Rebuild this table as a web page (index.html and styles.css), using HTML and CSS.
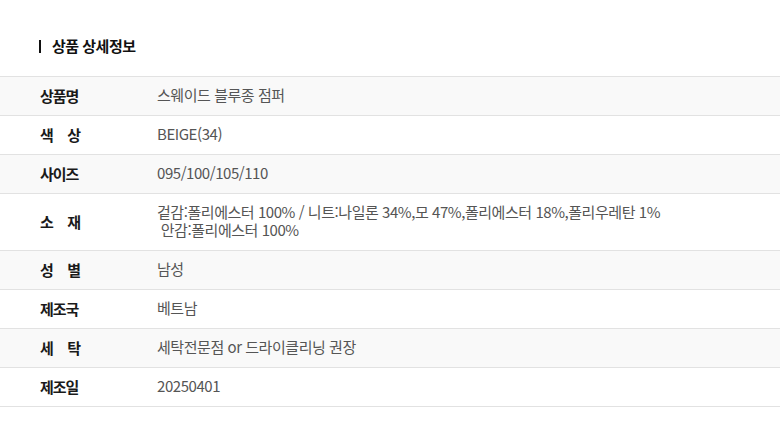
FILE: index.html
```html
<!DOCTYPE html>
<html lang="ko">
<head>
<meta charset="utf-8">
<link rel="stylesheet" href="styles.css">
</head>
<body>
<section class="detail">
  <h2 class="title"><span class="bar"></span>상품 상세정보</h2>
  <div class="table">
    <div class="row odd"><div class="label"><span class="lbl">상품명</span></div><div class="value">스웨이드 블루종 점퍼</div></div>
    <div class="row"><div class="label"><span class="lbl">색 상</span></div><div class="value">BEIGE(34)</div></div>
    <div class="row odd"><div class="label"><span class="lbl">사이즈</span></div><div class="value">095/100/105/110</div></div>
    <div class="row"><div class="label"><span class="lbl">소 재</span></div><div class="value pre">겉감:폴리에스터 100% / 니트:나일론 34%,모 47%,폴리에스터 18%,폴리우레탄 1%
 안감:폴리에스터 100%</div></div>
    <div class="row odd"><div class="label"><span class="lbl">성 별</span></div><div class="value">남성</div></div>
    <div class="row"><div class="label"><span class="lbl">제조국</span></div><div class="value">베트남</div></div>
    <div class="row odd"><div class="label"><span class="lbl">세 탁</span></div><div class="value">세탁전문점 or 드라이클리닝 권장</div></div>
    <div class="row"><div class="label"><span class="lbl">제조일</span></div><div class="value">20250401</div></div>
  </div>
</section>
</body>
</html>
```
FILE: styles.css
```css
html, body {
  margin: 0;
  padding: 0;
  background: #fff;
}
body {
  font-family: "Noto Sans CJK KR", "Noto Sans", sans-serif;
  color: #222;
}
.detail {
  padding-top: 36px;
}
.title {
  display: flex;
  align-items: center;
  margin: 0 0 20px 39px;
  font-size: 15px;
  font-weight: 700;
  line-height: 20px;
  color: #111;
  letter-spacing: -0.5px;
}
.bar {
  display: inline-block;
  width: 2px;
  height: 13px;
  background: #111;
  margin-right: 11px;
}
.table {
  border-top: 1px solid #e2e2e2;
}
.row {
  display: flex;
  align-items: center;
  border-bottom: 1px solid #e2e2e2;
  min-height: 36px;
  padding-bottom: 2px;
  background: #fff;
}
.row.odd {
  background: #f9f9f9;
}
.label {
  width: 117px;
  padding-left: 40px;
  box-sizing: content-box;
  flex: none;
}
.lbl {
  display: inline-block;
  width: 40px;
  font-size: 15px;
  line-height: 18px;
  font-weight: 700;
  color: #1a1a1a;
  text-align: justify;
  text-align-last: justify;
  letter-spacing: -1px;
}
.value {
  font-size: 15px;
  line-height: 18px;
  color: #555;
  padding: 9px 0;
  letter-spacing: -0.45px;
}
.value.pre {
  white-space: pre-wrap;
}
```
